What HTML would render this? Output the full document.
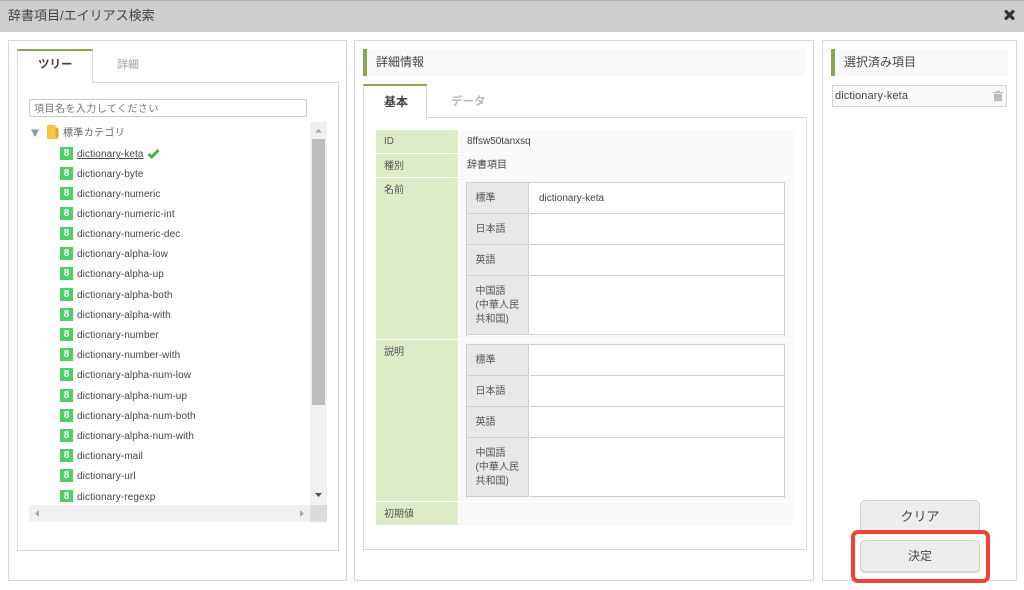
<!DOCTYPE html>
<html lang="ja"><head><meta charset="utf-8"><title>辞書項目/エイリアス検索</title>
<style>
html,body{margin:0;padding:0;background:#fff}
#p{position:relative;width:1024px;height:590px;overflow:hidden;background:#fff;font-family:"Liberation Sans","Noto Sans CJK JP",sans-serif;color:#444;font-size:10px}
#p div,#p span.a,#p svg{position:absolute;box-sizing:border-box}
.b{border:1px solid #d8d8d8;background:#fff}
.t{white-space:nowrap;line-height:14px}
.ic{width:13px;height:13px;background:#4fd066;color:#fff;font-weight:bold;font-size:10px;line-height:13px;text-align:center;left:60px}
.r{left:77px;margin-top:2px;font-size:10px;letter-spacing:.1px;color:#444;white-space:nowrap;line-height:14px}
.lc{left:376px;width:82px;background:#deebc7;color:#555;padding:6px 0 0 8px;line-height:14px}
.vc{left:459px;width:334px;background:#f9f9f9}
.il{left:467px;width:62px;background:#e8e8e8;border-right:1px solid #d0d0d0;border-bottom:1px solid #d0d0d0;color:#555;padding-left:8.500px;line-height:14px;font-size:10px}
.il.s{line-height:32px}
.iv{left:530px;width:254px;background:#fff;border-bottom:1px solid #d0d0d0;line-height:14px}
.btn{left:860px;width:120px;height:32px;background:#ededed;border:1px solid #d4d4d4;border-radius:5px;box-shadow:0 1px 1px #ccc;text-align:center;font-size:13px;line-height:31px;color:#444}
</style></head><body><div id="p">
<div style="left:0;top:0;width:1024px;height:32px;background:#cecece;border-top:1px solid #b4b4b4"></div>
<div class="t" style="left:8px;top:8px;font-size:13px;line-height:16px;color:#444">辞書項目/エイリアス検索</div>
<svg style="left:1004px;top:9px" width="11" height="12" viewBox="0 0 13 13"><path d="M2.500 2.500L10.500 10.500M10.500 2.500L2.500 10.500" stroke="#333" stroke-width="3.800" stroke-linecap="round"/></svg>

<div class="b" style="left:8px;top:40px;width:339px;height:541px"></div>
<div class="b" style="left:354px;top:40px;width:460px;height:541px"></div>
<div class="b" style="left:822px;top:40px;width:195px;height:541px"></div>

<!-- left tabs -->
<div class="b" style="left:17px;top:82px;width:322px;height:469px"></div>
<div style="left:17px;top:49px;width:76px;height:34px;background:#fff;border-top:2px solid #87a84f;border-left:1px solid #d8d8d8;border-right:1px solid #d8d8d8"></div>
<div class="t" style="left:38px;top:58px;font-size:11.500px;font-weight:bold;color:#444">ツリー</div>
<div class="t" style="left:117px;top:58px;font-size:11px;font-weight:bold;color:#bbb">詳細</div>
<div style="left:29px;top:99px;width:278px;height:18px;border:1px solid #c8c8c8;border-radius:2px;background:#fff"></div>
<div class="t" style="left:34px;top:103px;font-size:10px;color:#777;letter-spacing:.45px">項目名を入力してください</div>

<svg style="left:30px;top:128px" width="10" height="10" viewBox="0 0 10 10"><path d="M1 1.500H9L5 9Z" fill="#8e9aa8"/></svg>
<svg style="left:46px;top:125px" width="14" height="14" viewBox="0 0 14 14"><path d="M1 0H9.500V14H2Q1 14 1 13Z" fill="#f5c842"/><path d="M9.500 2L12.500 3.500V13L9.500 14Z" fill="#e2ae2e"/></svg>
<div class="r" style="top:125px;left:63px;color:#666;letter-spacing:.35px">標準カテゴリ</div>

<div class="ic" style="top:147px">8</div><div class="r" style="top:146px;text-decoration:underline">dictionary-keta</div>
<svg style="left:147px;top:148px" width="13" height="11" viewBox="0 0 13 11"><path d="M1.500 6L4.800 9L11.500 2" fill="none" stroke="#3cb44b" stroke-width="2.800"/></svg>
<div class="ic" style="top:167px">8</div><div class="r" style="top:166px">dictionary-byte</div>
<div class="ic" style="top:187px">8</div><div class="r" style="top:186px">dictionary-numeric</div>
<div class="ic" style="top:207px">8</div><div class="r" style="top:206px">dictionary-numeric-int</div>
<div class="ic" style="top:227px">8</div><div class="r" style="top:226px">dictionary-numeric-dec</div>
<div class="ic" style="top:247px">8</div><div class="r" style="top:246px">dictionary-alpha-low</div>
<div class="ic" style="top:267px">8</div><div class="r" style="top:266px">dictionary-alpha-up</div>
<div class="ic" style="top:288px">8</div><div class="r" style="top:287px">dictionary-alpha-both</div>
<div class="ic" style="top:308px">8</div><div class="r" style="top:307px">dictionary-alpha-with</div>
<div class="ic" style="top:328px">8</div><div class="r" style="top:327px">dictionary-number</div>
<div class="ic" style="top:348px">8</div><div class="r" style="top:347px">dictionary-number-with</div>
<div class="ic" style="top:368px">8</div><div class="r" style="top:367px">dictionary-alpha-num-low</div>
<div class="ic" style="top:389px">8</div><div class="r" style="top:388px">dictionary-alpha-num-up</div>
<div class="ic" style="top:409px">8</div><div class="r" style="top:408px">dictionary-alpha-num-both</div>
<div class="ic" style="top:429px">8</div><div class="r" style="top:428px">dictionary-alpha-num-with</div>
<div class="ic" style="top:449px">8</div><div class="r" style="top:448px">dictionary-mail</div>
<div class="ic" style="top:469px">8</div><div class="r" style="top:468px">dictionary-url</div>
<div class="ic" style="top:490px;height:12px">8</div><div class="r" style="top:489px">dictionary-regexp</div>

<div style="left:310px;top:122px;width:17px;height:383px;background:#f0f0f0"></div>
<div style="left:312px;top:139px;width:13px;height:266px;background:#bdbdbd"></div>
<svg style="left:310px;top:122px" width="17" height="17" viewBox="0 0 17 17"><path d="M5 10.500L8.500 7L12 10.500Z" fill="#a8a8a8"/></svg>
<svg style="left:310px;top:488px" width="17" height="17" viewBox="0 0 17 17"><path d="M5 5H12L8.500 9Z" fill="#505050"/></svg>
<div style="left:29px;top:505px;width:281px;height:17px;background:#f0f0f0"></div>
<div style="left:310px;top:505px;width:17px;height:17px;background:#dcdcdc"></div>
<svg style="left:29px;top:505px" width="17" height="17" viewBox="0 0 17 17"><path d="M10 5V12L6 8.500Z" fill="#a8a8a8"/></svg>
<svg style="left:293px;top:505px" width="17" height="17" viewBox="0 0 17 17"><path d="M7 5V12L11 8.500Z" fill="#a8a8a8"/></svg>

<!-- middle -->
<div style="left:363px;top:49px;width:442px;height:27px;background:#f9f9f9;border-left:4px solid #87a84f"></div>
<div class="t" style="left:376px;top:54px;font-size:12px;line-height:16px;color:#444">詳細情報</div>
<div class="b" style="left:363px;top:117px;width:444px;height:433px"></div>
<div style="left:363px;top:84px;width:64px;height:35px;background:#fff;border-top:2px solid #87a84f;border-left:1px solid #d8d8d8;border-right:1px solid #d8d8d8"></div>
<div class="t" style="left:384px;top:95px;font-size:12px;font-weight:bold;color:#444">基本</div>
<div class="t" style="left:451px;top:95px;font-size:11.500px;font-weight:bold;color:#bbb">データ</div>

<div class="lc" style="top:130px;height:23px;padding-top:5px">ID</div><div class="vc" style="top:130px;height:23px"></div>
<div class="t" style="left:467px;top:135px">8ffsw50tanxsq</div>
<div class="lc" style="top:154px;height:23px">種別</div><div class="vc" style="top:154px;height:23px"></div>
<div class="t" style="left:467px;top:159px">辞書項目</div>
<div class="lc" style="top:178px;height:161px">名前</div><div class="vc" style="top:178px;height:161px"></div>
<div class="lc" style="top:340px;height:161px">説明</div><div class="vc" style="top:340px;height:161px"></div>
<div class="lc" style="top:502px;height:23px">初期値</div><div class="vc" style="top:502px;height:23px"></div>

<div style="left:466px;top:182px;width:319px;height:154px;border:1px solid #d0d0d0;border-bottom:0"></div>
<div class="il s" style="top:183px;height:31px">標準</div><div class="iv" style="top:183px;height:31px"></div>
<div class="t" style="left:539px;top:192px">dictionary-keta</div>
<div class="il s" style="top:214px;height:31px">日本語</div><div class="iv" style="top:214px;height:31px"></div>
<div class="il s" style="top:245px;height:31px">英語</div><div class="iv" style="top:245px;height:31px"></div>
<div class="il" style="top:276px;height:59px;padding-top:9px">中国語<br>(中華人民<br>共和国)</div><div class="iv" style="top:276px;height:59px"></div>

<div style="left:466px;top:344px;width:319px;height:154px;border:1px solid #d0d0d0;border-bottom:0"></div>
<div class="il s" style="top:345px;height:31px">標準</div><div class="iv" style="top:345px;height:31px"></div>
<div class="il s" style="top:376px;height:31px">日本語</div><div class="iv" style="top:376px;height:31px"></div>
<div class="il s" style="top:407px;height:31px">英語</div><div class="iv" style="top:407px;height:31px"></div>
<div class="il" style="top:438px;height:59px;padding-top:9px">中国語<br>(中華人民<br>共和国)</div><div class="iv" style="top:438px;height:59px"></div>

<!-- right -->
<div style="left:831px;top:49px;width:177px;height:27px;background:#f9f9f9;border-left:4px solid #87a84f"></div>
<div class="t" style="left:844px;top:54px;font-size:12px;line-height:16px;color:#444">選択済み項目</div>
<div style="left:832px;top:85px;width:175px;height:22px;background:#f9f9f9;border:1px solid #d4d4d4"></div>
<div class="t" style="left:835px;top:89px;font-size:11px;letter-spacing:.1px;color:#444">dictionary-keta</div>
<svg style="left:992px;top:90px" width="12" height="12" viewBox="0 0 12 12"><path d="M1 2H11V3.200H1ZM4.200 .8H7.800V2H4.200ZM2 4H10V11.200H2Z" fill="#bcbcbc"/></svg>

<div class="btn" style="top:500px">クリア</div>
<div class="btn" style="top:540px;font-size:12px">決定</div>
<div style="left:851px;top:530px;width:139px;height:53px;border:4px solid #f44336;border-radius:7px"></div>
</div></body></html>
